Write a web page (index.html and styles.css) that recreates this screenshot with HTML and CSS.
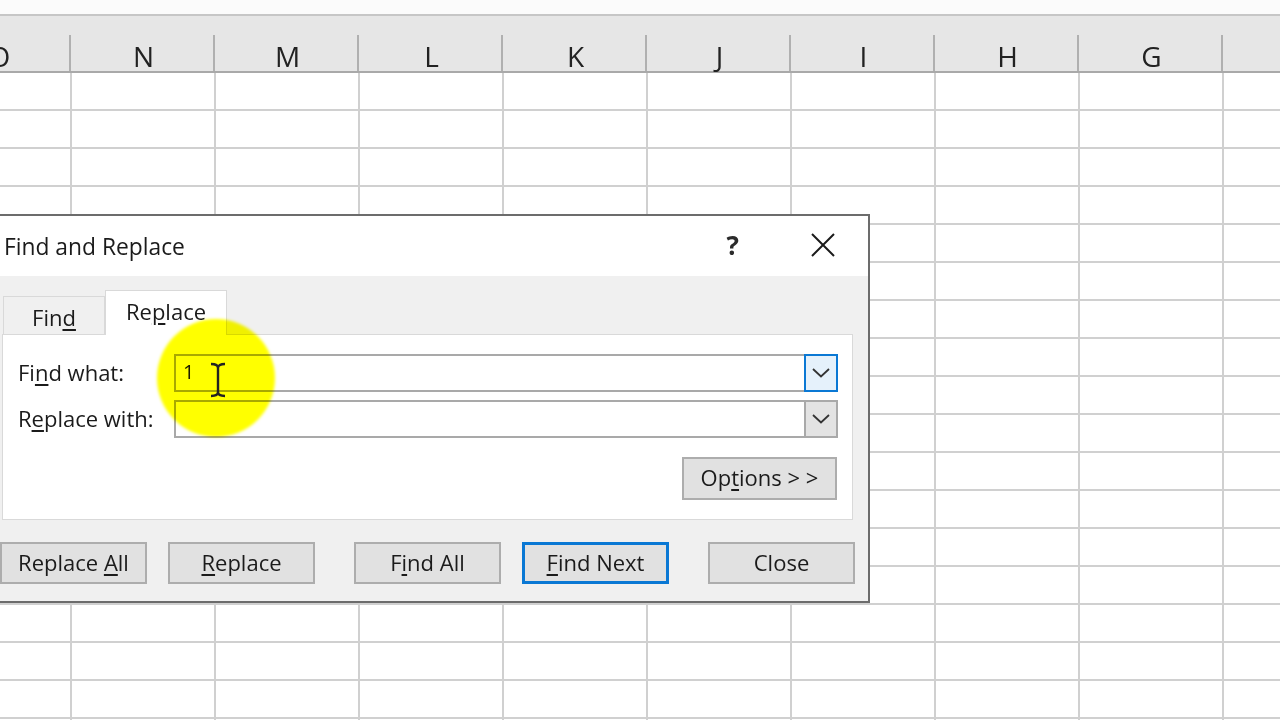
FILE: index.html
```html
<!DOCTYPE html>
<html lang="en">
<head>
    <meta charset="UTF-8">
    <meta name="viewport" content="width=device-width, initial-scale=1.0">
    <title>Find and Replace</title>
    <link rel="stylesheet" href="styles.css">
</head>
<body>
    <div class="sheet">
        <div class="top-band"></div>
        <div class="col-heads">
            <div class="col-head">O</div>
            <div class="col-head">N</div>
            <div class="col-head">M</div>
            <div class="col-head">L</div>
            <div class="col-head">K</div>
            <div class="col-head">J</div>
            <div class="col-head">I</div>
            <div class="col-head">H</div>
            <div class="col-head">G</div>
            <div class="col-head"></div>
        </div>
        <div class="cells"></div>
    </div>

    <!-- Find and Replace dialog -->
    <div class="dialog">
        <div class="title-bar">
            <span class="title">Find and Replace</span>
            <span class="help">?</span>
            <span class="close-x">
                <svg width="24" height="24" viewBox="0 0 24 24"><path d="M1 1 L23 23 M23 1 L1 23" stroke="#1b1b1b" stroke-width="2" fill="none"/></svg>
            </span>
        </div>
        <div class="dialog-body">
            <div class="tabs">
                <div class="tab">Fin<u>d</u></div>
                <div class="tab active">Re<u>p</u>lace</div>
            </div>
            <div class="panel">
                <div class="field-row">
                    <label>Fi<u>n</u>d what:</label>
                    <div class="combo">
                        <span class="combo-text">1</span>
                        <span class="drop focus">
                            <svg width="18" height="10" viewBox="0 0 18 10"><path d="M1 1 L9 8.5 L17 1" stroke="#333" stroke-width="1.8" fill="none"/></svg>
                        </span>
                    </div>
                </div>
                <div class="field-row">
                    <label>R<u>e</u>place with:</label>
                    <div class="combo">
                        <span class="combo-text"></span>
                        <span class="drop">
                            <svg width="18" height="10" viewBox="0 0 18 10"><path d="M1 1 L9 8.5 L17 1" stroke="#333" stroke-width="1.8" fill="none"/></svg>
                        </span>
                    </div>
                </div>
                <div class="options-row">
                    <button class="btn options">Op<u>t</u>ions &gt; &gt;</button>
                </div>
            </div>
            <div class="actions">
                <button class="btn">Replace <u>A</u>ll</button>
                <button class="btn"><u>R</u>eplace</button>
                <button class="btn wide-gap">F<u>i</u>nd All</button>
                <button class="btn default"><u>F</u>ind Next</button>
                <button class="btn wide-gap">Close</button>
            </div>
        </div>
    </div>

    <!-- cursor highlight -->
    <div class="highlight"></div>
    <svg class="ibeam" width="20" height="36" viewBox="0 0 20 36">
        <path d="M3 2 Q10 2 10 6 Q10 2 17 2 M10 6 L10 30 M3 34 Q10 34 10 30 Q10 34 17 34" stroke="#222" stroke-width="2.4" fill="none"/>
    </svg>
</body>
</html>
```

FILE: styles.css
```css
body {
    margin: 0;
    width: 1280px;
    height: 720px;
    overflow: hidden;
    background: #fff;
    font-family: "Open Sans", "Noto Sans", sans-serif;
    color: #1b1b1b;
}
.sheet {
    width: 1280px;
    height: 720px;
    overflow: hidden;
}
.top-band {
    height: 14px;
    background: #fbfbfb;
    border-bottom: 2px solid #c6c6c6;
}
.col-heads {
    display: flex;
    margin-left: -73px;
    height: 55px;
    background: #e6e6e6;
    border-bottom: 2px solid #a9a9a9;
}
.col-head {
    flex: 0 0 144px;
    box-sizing: border-box;
    border-right: 2px solid #b4b4b4;
    border-image: linear-gradient(to bottom, transparent 19px, #b0b0b0 19px) 1;
    display: flex;
    align-items: center;
    justify-content: center;
    padding-top: 24px;
    padding-left: 3px;
    font-size: 28px;
    color: #222;
}
.cells {
    height: 648px;
    background-image:
        linear-gradient(to right, #d0d0d0 2px, transparent 2px),
        linear-gradient(to bottom, transparent 36px, #d0d0d0 36px);
    background-size: 144px 38px;
    background-position: 70px 0, 0 0;
}

/* dialog */
.dialog {
    position: absolute;
    left: 0;
    top: 214px;
    width: 868px;
    border: 2px solid #6c6c6c;
    border-left: none;
    background: #f0f0f0;
    font-size: 22px;
}
.title-bar {
    height: 60px;
    background: #fff;
    display: flex;
    align-items: center;
    padding-left: 4px;
}
.title {
    font-size: 22.8px;
}
.help {
    margin-left: auto;
    font-size: 26px;
    font-weight: 700;
    color: #2b2b2b;
    padding-bottom: 3px;
}
.close-x {
    display: flex;
    margin-left: 72px;
    margin-right: 33px;
    padding-bottom: 3px;
}
.dialog-body {
    padding-top: 14px;
}
.tabs {
    display: flex;
    align-items: flex-end;
    padding-left: 3px;
    height: 44px;
}
.tab {
    box-sizing: border-box;
    width: 102px;
    height: 38px;
    border: 1px solid #d9d9d9;
    border-bottom: none;
    display: flex;
    align-items: center;
    justify-content: center;
    padding-top: 2px;
}
.tab.active {
    width: 122px;
    height: 45px;
    background: #fff;
    margin-bottom: -1px;
    position: relative;
    padding-top: 0;
    padding-bottom: 4px;
}
.panel {
    box-sizing: border-box;
    margin-left: 2px;
    width: 851px;
    height: 186px;
    background: #fff;
    border: 1px solid #d9d9d9;
    padding: 19px 0 0 15px;
}
.field-row {
    display: flex;
    align-items: center;
    margin-bottom: 8px;
}
.field-row label {
    width: 156px;
    padding-bottom: 3px;
}
.combo {
    box-sizing: border-box;
    width: 664px;
    height: 38px;
    border: 2px solid #a9a9a9;
    display: flex;
    align-items: stretch;
    background: #fff;
}
.combo-text {
    flex: 1;
    padding-left: 7px;
    padding-bottom: 3px;
    display: flex;
    align-items: center;
    font-size: 20px;
}
.drop {
    box-sizing: border-box;
    width: 34px;
    margin: -2px -2px -2px 0;
    border: 2px solid #a9a9a9;
    background: #e3e3e3;
    display: flex;
    align-items: center;
    justify-content: center;
}
.drop.focus {
    border-color: #0a78d4;
    background: #e5f1fb;
}
.options-row {
    display: flex;
    justify-content: flex-end;
    padding-right: 15px;
    margin-top: 19px;
}
.btn {
    box-sizing: border-box;
    width: 147px;
    height: 42px;
    background: #e1e1e1;
    border: 2px solid #adadad;
    font-family: inherit;
    font-size: 22px;
    color: #1b1b1b;
    padding: 0 0 3px;
}
.btn.options {
    width: 155px;
    height: 43px;
}
.btn.default {
    border: 3px solid #0a78d4;
}
.actions {
    display: flex;
    gap: 21px;
    margin-top: 22px;
    height: 59px;
}
.actions .wide-gap {
    margin-left: 18px;
}
u {
    text-underline-offset: 3px;
    text-decoration-thickness: 1.5px;
}

/* cursor highlight */
.highlight {
    position: absolute;
    left: 157px;
    top: 319px;
    width: 118px;
    height: 118px;
    border-radius: 50%;
    background: #ffff00;
    mix-blend-mode: multiply;
    filter: blur(1.5px);
}
.ibeam {
    position: absolute;
    left: 208px;
    top: 362px;
}
```
